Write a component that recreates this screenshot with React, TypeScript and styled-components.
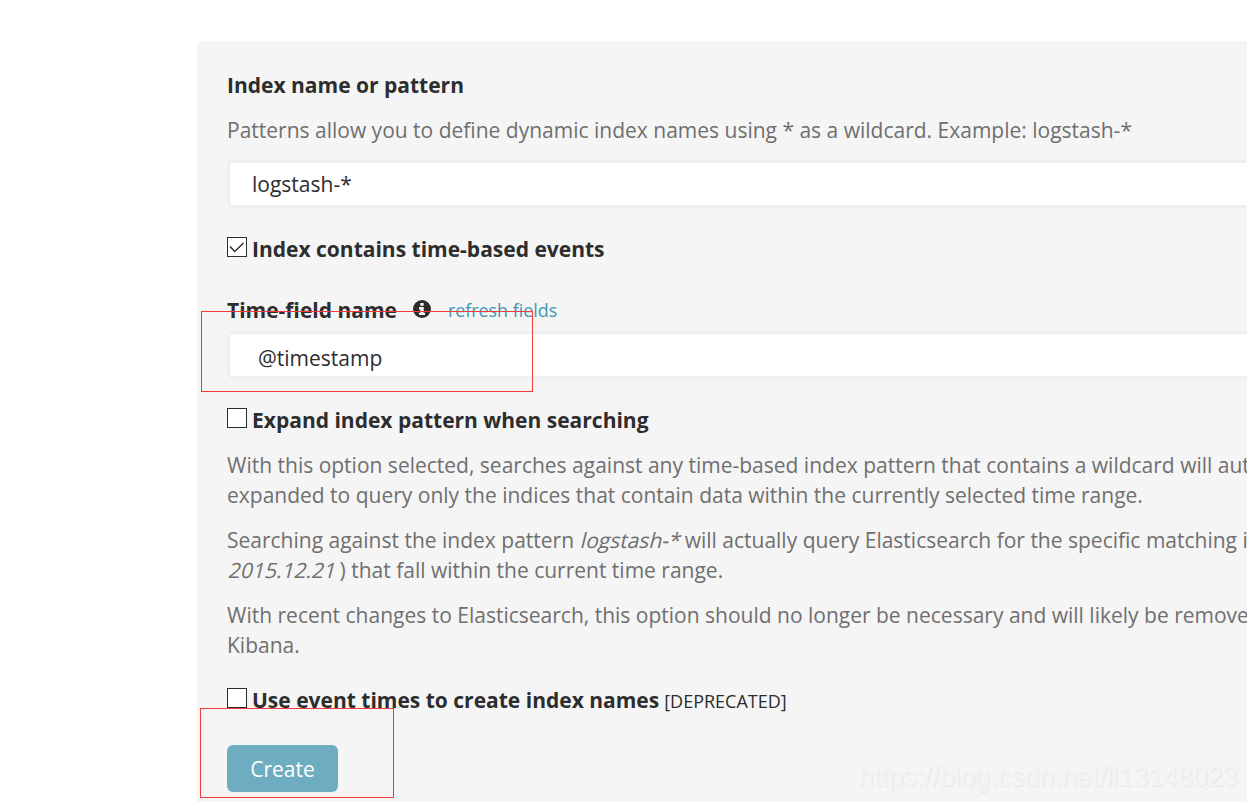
import React from 'react';
import styled, { createGlobalStyle } from 'styled-components';

const GlobalStyle = createGlobalStyle`
  html, body {
    margin: 0;
    height: 100%;
    overflow: hidden;
    background: #fff;
  }
  body {
    font-family: "Open Sans", "Noto Sans", sans-serif;
    font-size: 21px;
    line-height: 30px;
    color: #2d2d2d;
  }
`;

const Page = styled.div`
  position: relative;
  width: 1247px;
  height: 802px;
  overflow: hidden;
  padding: 41px 0 0 197px;
  box-sizing: border-box;
`;

const Panel = styled.form`
  width: 1150px;
  height: 800px;
  box-sizing: border-box;
  padding: 29px 30px 0;
  background: #f5f5f5;
  border-radius: 6px;
`;

const Label = styled.div`
  font-weight: 700;
  color: #2d2d2d;
`;

const Help = styled.p`
  margin: 15px 0 0;
  color: #6f6f6f;
  white-space: nowrap;
`;

const Slanted = styled.span`
  display: inline-block;
  transform: skewX(-14deg);
  transform-origin: 0 85%;
`;

const Field = styled.input`
  display: block;
  width: 100%;
  height: 48px;
  box-sizing: border-box;
  margin: 0;
  border: 3px solid #ecf0f1;
  border-radius: 6px;
  background: #fff;
  color: #2d2d2d;
  font: 400 21px "Open Sans", sans-serif;
  outline: none;
`;

const TopField = styled(Field)`
  margin-top: 15px;
  padding: 0 0 0 22px;
`;

const TimeField = styled(Field)`
  margin-top: 6px;
  padding: 5px 0 0 28px;
`;

const CheckRow = styled.label<{ $top: number }>`
  display: flex;
  align-items: flex-start;
  gap: 5px;
  margin-top: ${(p) => p.$top}px;
  font-weight: 700;
`;

const Box = styled.span`
  display: block;
  width: 20px;
  height: 20px;
  box-sizing: border-box;
  margin-top: 3px;
  border: 1px solid #2d2d2d;
  background: #fff;

  svg {
    display: block;
  }
`;

const Deprecated = styled.small`
  margin-left: 5px;
  font-size: 18px;
  font-weight: 400;
`;

const FieldHead = styled.div`
  display: flex;
  align-items: center;
  margin-top: 31px;
`;

const InfoSvg = styled.svg`
  flex: none;
  width: 18px;
  height: 18px;
  margin: 0 17px 2px 16px;
`;

const Refresh = styled.a`
  font-size: 17.85px;
  color: #3f97b3;
  text-decoration: none;
`;

const CreateButton = styled.button`
  display: block;
  width: 111px;
  height: 47px;
  margin: 29px 0 0;
  padding: 0;
  border: 0;
  border-radius: 6px;
  background: #6eadc1;
  color: #fff;
  font: 400 21px "Open Sans", sans-serif;
`;

const Marker = styled.div<{ $x: number; $y: number; $w: number; $h: number }>`
  position: absolute;
  left: ${(p) => p.$x}px;
  top: ${(p) => p.$y}px;
  width: ${(p) => p.$w}px;
  height: ${(p) => p.$h}px;
  box-sizing: border-box;
  border: 1px solid #f03c3c;
  pointer-events: none;
`;

const Watermark = styled.div`
  position: absolute;
  right: 9px;
  bottom: 9px;
  font: 400 26.85px "Liberation Sans", sans-serif;
  line-height: 32px;
  color: #f3f3f3;
  text-shadow: 1px 1px 1px #e6e6e6;
`;

const Check = () => (
  <svg width="18" height="18" viewBox="0 0 18 18" fill="none" stroke="#2d2d2d" strokeWidth="1.4">
    <path d="M2 8.5l4.7 5L15.5 5" />
  </svg>
);

const InfoIcon = () => (
  <InfoSvg viewBox="0 0 18 18">
    <circle cx="9" cy="9" r="9" fill="#2d2d2d" />
    <path
      fill="#f5f5f5"
      d="M7.3 3h3.4v2.8H7.3zM6 7.1h4.7v5.6H12v2.3H6v-2.3h1.3V9.4H6z"
    />
  </InfoSvg>
);

export default function App() {
  return (
    <Page>
      <GlobalStyle />
      <Panel>
        <Label>Index name or pattern</Label>
        <Help>Patterns allow you to define dynamic index names using * as a wildcard. Example: logstash-*</Help>
        <TopField readOnly value="logstash-*" />
        <CheckRow $top={26}>
          <Box>
            <Check />
          </Box>
          Index contains time-based events
        </CheckRow>
        <FieldHead>
          <Label>Time-field name</Label>
          <InfoIcon />
          <Refresh href="#">refresh fields</Refresh>
        </FieldHead>
        <TimeField readOnly value="@timestamp" />
        <CheckRow $top={26}>
          <Box />
          Expand index pattern when searching
        </CheckRow>
        <Help>
          With this option selected, searches against any time-based index pattern that contains a wildcard will automatically be
          <br />
          expanded to query only the indices that contain data within the currently selected time range.
        </Help>
        <Help>
          Searching against the index pattern <Slanted>logstash-*</Slanted> will actually query Elasticsearch for the specific matching indices (e.g. logstash-
          <br />
          <Slanted>2015.12.21</Slanted> ) that fall within the current time range.
        </Help>
        <Help>
          With recent changes to Elasticsearch, this option should no longer be necessary and will likely be removed in a future version of
          <br />
          Kibana.
        </Help>
        <CheckRow $top={25}>
          <Box />
          <span>
            Use event times to create index names<Deprecated>[DEPRECATED]</Deprecated>
          </span>
        </CheckRow>
        <CreateButton type="button">Create</CreateButton>
      </Panel>
      <Marker $x={201} $y={311} $w={332} $h={81} />
      <Marker $x={200} $y={708} $w={194} $h={90} />
      <Watermark>https://blog.csdn.net/li13148023</Watermark>
    </Page>
  );
}
